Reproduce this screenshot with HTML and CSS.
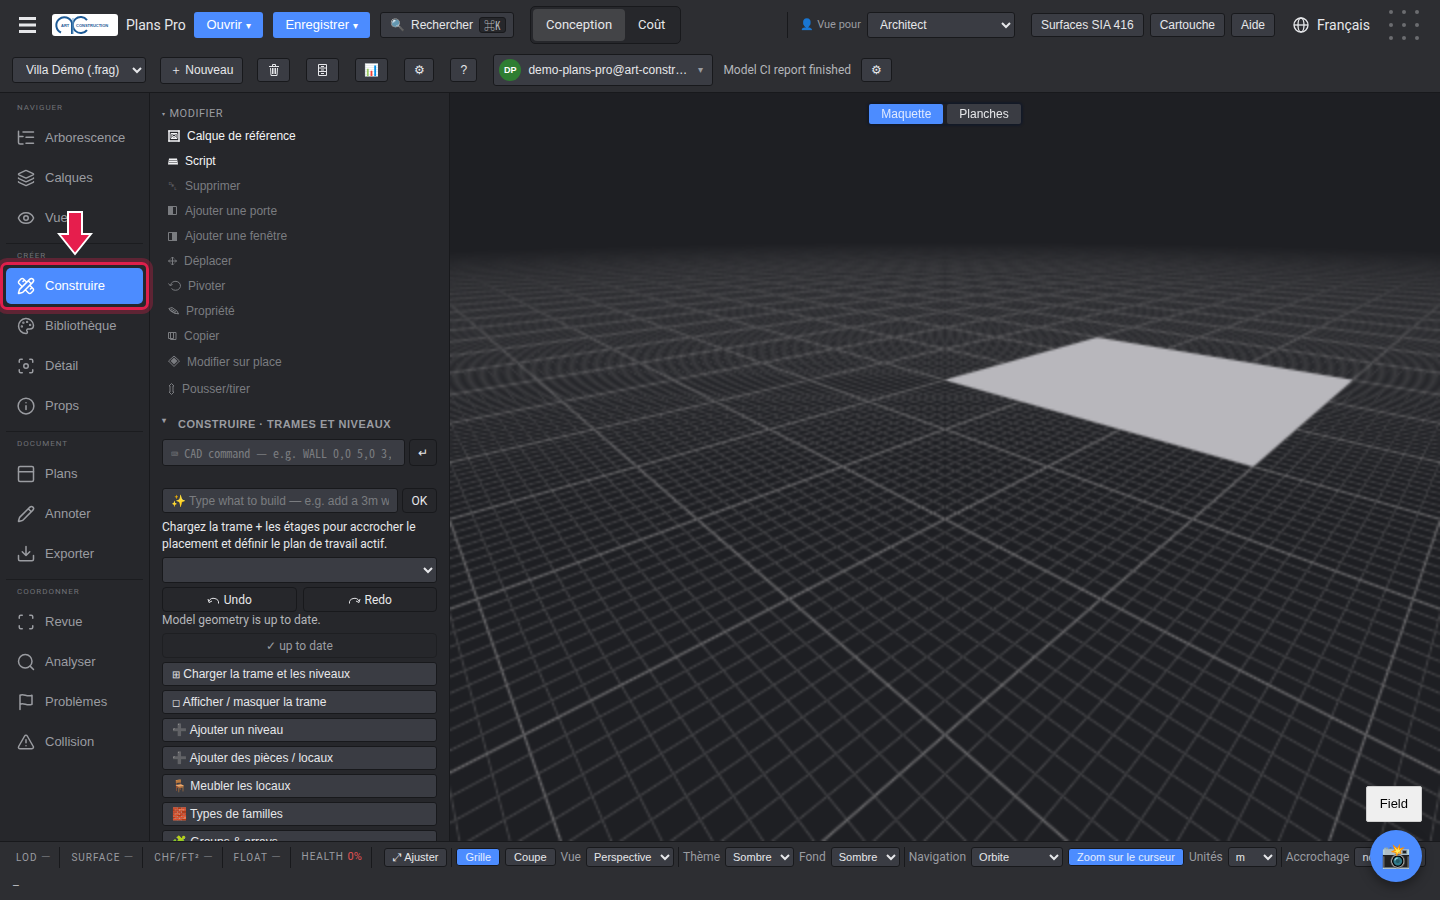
FILE: index.html
```html
<!DOCTYPE html>
<html lang="fr">
<head>
<meta charset="utf-8">
<title>Plans Pro</title>
<link rel="stylesheet" href="styles.css">
</head>
<body>
<header class="header">
  <div class="bar">
    <button class="burger" aria-label="Menu"><svg width="17" height="16" viewBox="0 0 17 16"><path d="M0 1.5h17M0 8h17M0 14.5h17" stroke="currentColor" stroke-width="3"/></svg></button>
    <div class="brand">
      <svg class="logo" width="66" height="22" viewBox="0 0 66 22" role="img" aria-label="ART Construction">
        <rect width="66" height="22" rx="3" fill="#fff"/>
        <g fill="none" stroke="#1d5a96" stroke-width="2"><path d="M9 18.5A8 8 0 1 1 20 9V20"/><path d="M35 6A8 8 0 1 0 35 16"/></g>
        <path d="M21 4V20" stroke="#6fa4cf" stroke-width="1"/>
        <text x="9" y="13" class="logo-text">ART</text><text x="24" y="13" class="logo-text">CONSTRUCTION</text>
      </svg>
      <span class="brand-name">Plans Pro</span>
    </div>
    <button class="primary w-open">Ouvrir <small>▾</small></button>
    <button class="primary w-save">Enregistrer <small>▾</small></button>
    <button class="btn search"><span>🔍</span><span>Rechercher</span><kbd>⌘K</kbd></button>
    <div class="segmented"><button class="seg active">Conception</button><button class="seg">Coût</button></div>
    <div class="bar-end">
      <label class="persona" for="persona">👤 Vue pour</label>
      <select class="select w-persona" id="persona"><option>Architect</option></select>
      <div class="links"><button class="btn">Surfaces SIA 416</button><button class="btn">Cartouche</button><button class="btn">Aide</button></div>
      <button class="lang"><svg width="16" height="16" viewBox="0 0 24 24" fill="none" stroke="currentColor" stroke-width="2"><circle cx="12" cy="12" r="10.5"/><ellipse cx="12" cy="12" rx="4.5" ry="10.5"/><path d="M1.5 12h21"/></svg>Français</button>
      <svg class="dots" width="32" height="32" viewBox="0 0 32 32" fill="#6b6c70"><circle cx="3" cy="3" r="2"/><circle cx="16" cy="3" r="2"/><circle cx="29" cy="3" r="2"/><circle cx="3" cy="16" r="2"/><circle cx="16" cy="16" r="2"/><circle cx="29" cy="16" r="2"/><circle cx="3" cy="29" r="2"/><circle cx="16" cy="29" r="2"/><circle cx="29" cy="29" r="2"/></svg>
    </div>
  </div>
  <div class="bar bar-project">
    <select class="select w-project" aria-label="Projet"><option>Villa Démo (.frag)</option></select>
    <button class="btn tall">＋ Nouveau</button>
    <div class="tools">
      <button class="btn" aria-label="Supprimer le projet"><svg width="10" height="12" viewBox="0 0 10 12" fill="none" stroke="currentColor"><path d="M0 2.5h10M3.500 2V.5h3V2M1.500 4l.5 7.500h6L8.500 4M3.500 4v6M5 4v6M6.500 4v6"/></svg></button>
      <button class="btn" aria-label="Archives"><svg width="9" height="12" viewBox="0 0 9 12" fill="none" stroke="currentColor"><path d="M.5.5h8v11h-8zM.5 4h8M.5 7.500h8M3 2.500h3M3 6h3M3 9.500h3"/></svg></button>
      <button class="btn" aria-label="Rapport">📊</button>
      <button class="btn" aria-label="Réglages">⚙</button>
      <button class="btn" aria-label="Aide">?</button>
    </div>
    <button class="btn account"><span class="avatar">DP</span><span class="email">demo-plans-pro@art-construction.ch</span><small>▾</small></button>
    <span class="status">Model CI report finished</span>
    <button class="btn" aria-label="Options du rapport">⚙</button>
  </div>
</header>

<div class="main">
  <nav class="sidebar">
    <section class="group"><h2>NAVIGUER</h2>
      <button class="nav"><svg viewBox="0 0 24 24"><path d="M2 3v15a2 2 0 0 0 2 2h4M2 10h6M8 4h14M12 11h10M12 19h10"/></svg>Arborescence</button>
      <button class="nav"><svg viewBox="0 0 24 24"><path d="m12.8 2.2a2 2 0 0 0-1.7 0L2.6 6.1a1 1 0 0 0 0 1.8l8.6 3.9a2 2 0 0 0 1.7 0l8.6-3.9a1 1 0 0 0 0-1.8zM2 12a1 1 0 0 0 .6.9l8.6 3.9a2 2 0 0 0 1.7 0l8.6-3.9A1 1 0 0 0 22 12M2 17a1 1 0 0 0 .6.9l8.6 3.9a2 2 0 0 0 1.7 0l8.6-3.9A1 1 0 0 0 22 17"/></svg>Calques</button>
      <button class="nav"><svg viewBox="0 0 24 24"><path d="M2 12.3a1 1 0 0 1 0-.7 10.8 10.8 0 0 1 20 0 1 1 0 0 1 0 .7 10.8 10.8 0 0 1-20 0"/><circle cx="12" cy="12" r="3"/></svg>Vues</button>
    </section>
    <section class="group"><h2>CRÉER</h2>
      <button class="nav current"><svg viewBox="0 0 24 24"><path d="M13 7 8.700 2.700a2.400 2.400 0 0 0-3.400 0L2.700 5.300a2.400 2.400 0 0 0 0 3.400L7 13M8 6l2-2M18 16l2-2M17 11l4.300 4.300a2.400 2.400 0 0 1 0 3.400l-2.600 2.600a2.400 2.400 0 0 1-3.400 0L11 17M21.200 6.800a1 1 0 0 0-4-4L3.800 16.200a2 2 0 0 0-.5.8L2 21.400a.5.5 0 0 0 .6.6L7 20.700a2 2 0 0 0 .8-.5zM15 5l4 4"/></svg>Construire<span class="ring"></span>
        <svg class="arrow" viewBox="0 0 36 46"><path d="M11 2h14v22h9L18 44 2 24h9z"/></svg></button>
      <button class="nav"><svg viewBox="0 0 24 24"><path d="M12 22a10 10 0 1 1 10-11c0 3-2 5-5 5h-2.300a1.800 1.800 0 0 0-1.400 2.800l.3.400A1.800 1.800 0 0 1 12 22z"/><g class="solid"><circle cx="13.500" cy="6.500" r=".6"/><circle cx="17.500" cy="10.500" r=".6"/><circle cx="6.500" cy="12.500" r=".6"/><circle cx="8.500" cy="7.500" r=".6"/></g></svg>Bibliothèque</button>
      <button class="nav"><svg viewBox="0 0 24 24"><circle cx="12" cy="12" r="3"/><path d="M3 7V5a2 2 0 0 1 2-2h2M17 3h2a2 2 0 0 1 2 2v2M21 17v2a2 2 0 0 1-2 2h-2M7 21H5a2 2 0 0 1-2-2v-2"/></svg>Détail</button>
      <button class="nav"><svg viewBox="0 0 24 24"><circle cx="12" cy="12" r="10.500"/><path d="M12 16.500V11.500M12 7.500v.1"/></svg>Props</button>
    </section>
    <section class="group"><h2>DOCUMENT</h2>
      <button class="nav"><svg viewBox="0 0 24 24"><rect x="2" y="2" width="20" height="20" rx="2"/><path d="M2 9h20"/></svg>Plans</button>
      <button class="nav"><svg viewBox="0 0 24 24"><path d="M21.200 6.800a1 1 0 0 0-4-4L3.800 16.200a2 2 0 0 0-.5.8L2 21.400a.5.5 0 0 0 .6.6L7 20.700a2 2 0 0 0 .8-.5zM15 5l4 4"/></svg>Annoter</button>
      <button class="nav"><svg viewBox="0 0 24 24"><path d="M2 14v5a2 2 0 0 0 2 2h16a2 2 0 0 0 2-2v-5M7 9l5 5 5-5M12 14V2"/></svg>Exporter</button>
    </section>
    <section class="group"><h2>COORDONNER</h2>
      <button class="nav"><svg viewBox="0 0 24 24"><path d="M3 7V5a2 2 0 0 1 2-2h2M17 3h2a2 2 0 0 1 2 2v2M21 17v2a2 2 0 0 1-2 2h-2M7 21H5a2 2 0 0 1-2-2v-2"/></svg>Revue</button>
      <button class="nav"><svg viewBox="0 0 24 24"><circle cx="11" cy="11" r="9"/><path d="m22 22-4.500-4.500"/></svg>Analyser</button>
      <button class="nav"><svg viewBox="0 0 24 24"><path d="M4 22V3c5-3 9 3 16 0v12c-7 3-11-3-16 0"/></svg>Problèmes</button>
      <button class="nav"><svg viewBox="0 0 24 24"><path d="m21.700 18-8-14a2 2 0 0 0-3.500 0l-8 14A2 2 0 0 0 4 21h16a2 2 0 0 0 1.700-3M12 9v4M12 17v.1"/></svg>Collision</button>
    </section>
  </nav>

  <aside class="panel">
    <h2 class="fold"><small>▾</small>MODIFIER</h2>
    <div class="actions">
      <button class="action"><svg width="12" height="12" viewBox="0 0 12 12"><path d="M1 1h10v10H1zM3 3.500h6v5H3z"/><circle cx="6" cy="5.500" r="1.500"/><path d="M3 9l2-2h2l2 2M0 1h12M0 11h12M1 0v12M11 0v12" /></svg>Calque de référence</button>
      <button class="action"><svg width="10" height="12" viewBox="0 0 10 12"><path d="M1 3.500h8l1 6H0z" fill="currentColor" stroke="none"/><path d="M1 5.500h8M1 7.500h8" stroke="#8a8b8e"/></svg>Script</button>
      <button class="action" disabled><span>␡</span>Supprimer</button>
      <button class="action" disabled><svg width="10" height="12" viewBox="0 0 10 12"><path d="M.5 1.500h8v8h-8z"/><path d="M0 1h5v9H0z" fill="currentColor" stroke="none"/></svg>Ajouter une porte</button>
      <button class="action" disabled><svg width="10" height="12" viewBox="0 0 10 12"><path d="M.5 2.500h8v8h-8z"/><path d="M4 2h5v9H4z" fill="currentColor" stroke="none"/></svg>Ajouter une fenêtre</button>
      <button class="action" disabled><svg width="9" height="12" viewBox="0 0 9 12"><path d="M4.500 2v8M.5 6h8M3 3.500 4.500 2 6 3.500M3 8.500 4.500 10 6 8.500M2 4.500.5 6 2 7.500M7 4.500 8.500 6 7 7.500"/></svg>Déplacer</button>
      <button class="action" disabled><svg width="13" height="12" viewBox="0 0 13 12"><path d="M2.500 5.500a5 4.500 0 1 1 1 3M.5 3.500l2 2.500 2-2"/></svg>Pivoter</button>
      <button class="action" disabled><svg width="11" height="12" viewBox="0 0 11 12"><path d="M1 3.500 4 2.500l5 3.500 1.500 3L7 8 2 5zM1 3.500l1.500 2.500 4.500 2.500h3.500M3 4l5 3"/></svg>Propriété</button>
      <button class="action" disabled><svg width="9" height="12" viewBox="0 0 9 12"><path d="M.5 2.500h5v6h-5zM2.500 2.500h5.500v7h-5.500z"/></svg>Copier</button>
      <button class="action inplace" disabled><svg width="12" height="14" viewBox="0 0 12 14"><path d="M6 1l5.500 5L6 11.500.5 6z"/><path d="M6 2.500 9.500 6 6 9.500 2.500 6z" fill="currentColor" stroke="none"/></svg>Modifier sur place</button>
      <button class="action" disabled><svg width="7" height="12" viewBox="0 0 7 12"><path d="M3.500.5 6 3H5v6h1l-2.500 2.500L1 9h1V3H1z"/></svg>Pousser/tirer</button>
    </div>
    <h2 class="fold strong"><small>▾</small>CONSTRUIRE · TRAMES ET NIVEAUX</h2>
    <div class="field-row cad"><input class="input mono" aria-label="Commande CAD" placeholder="⌨ CAD command — e.g. WALL 0,0 5,0 3,0"><button class="ghost" aria-label="Valider">↵</button></div>
    <div class="field-row"><input class="input" aria-label="Description" placeholder="✨ Type what to build — e.g. add a 3m wall"><button class="ghost ok">OK</button></div>
    <p class="hint">Chargez la trame + les étages pour accrocher le placement et définir le plan de travail actif.</p>
    <select class="select level" aria-label="Niveau"><option></option></select>
    <div class="undo">
      <button class="ghost"><svg width="13" height="10" viewBox="0 0 13 10"><path d="M2 6a5 4.500 0 0 1 9.500 2.500M1 4l1 3.500L5 6"/></svg>Undo</button>
      <button class="ghost"><svg width="13" height="10" viewBox="0 0 13 10"><path d="M11 6a5 4.500 0 0 0-9.500 2.500M12 4l-1 3.500L8 6"/></svg>Redo</button>
    </div>
    <p class="sync">Model geometry is up to date.</p>
    <button class="ghost wide" disabled>✓ up to date</button>
    <div class="commands">
      <button class="btn"><small>⊞</small> Charger la trame et les niveaux</button>
      <button class="btn"><small>◻</small> Afficher / masquer la trame</button>
      <button class="btn">➕ Ajouter un niveau</button>
      <button class="btn">➕ Ajouter des pièces / locaux</button>
      <button class="btn">🪑 Meubler les locaux</button>
      <button class="btn">🧱 Types de familles</button>
      <button class="btn">🧩 Groups &amp; arrays</button>
    </div>
  </aside>

  <main class="viewport">
    <canvas class="scene"></canvas>
    <div class="tabs"><button class="tab active">Maquette</button><button class="tab">Planches</button></div>
  </main>
</div>

<footer class="footer">
  <div class="foot-row">
    <div class="metrics">
      <span class="metric">LOD <i>—</i></span><span class="metric">SURFACE <i>—</i></span><span class="metric">CHF/FT² <i>—</i></span><span class="metric">FLOAT <i>—</i></span><span class="metric">HEALTH <b>0%</b></span>
    </div>
    <div class="set"><button class="mini fit">⤢ Ajuster</button></div>
    <div class="set"><button class="mini on">Grille</button><button class="mini">Coupe</button><label for="view">Vue</label><select class="mini-select w-view" id="view"><option>Perspective</option></select></div>
    <div class="set"><label for="theme">Thème</label><select class="mini-select w-theme" id="theme"><option>Sombre</option></select><label for="back">Fond</label><select class="mini-select w-theme" id="back"><option>Sombre</option></select></div>
    <div class="set"><label for="navmode">Navigation</label><select class="mini-select w-nav" id="navmode"><option>Orbite</option></select><button class="mini on">Zoom sur le curseur</button><label for="units">Unités</label><select class="mini-select w-units" id="units"><option>m</option></select></div>
    <div class="set"><label for="snap">Accrochage</label><select class="mini-select w-snap" id="snap"><option>normal</option></select></div>
  </div>
  <div class="message">–</div>
</footer>
<div class="floating"><button class="field-btn">Field</button><button class="camera" aria-label="Capture">📸</button></div>
<script src="scene.js"></script>
</body>
</html>
```

FILE: styles.css
```css
:root {
  --ui: "Liberation Sans", Arial, sans-serif;
  --text: Roboto, sans-serif;
  --mono: "Noto Sans Mono CJK JP", "Noto Sans Mono CJK SC", "Liberation Mono", monospace;
  --bar: #2d2e32;
  --side: #26272b;
  --control: #3a3c43;
  --line: #18191c;
  --ink: #e6e7ea;
  --muted: #9a9ca1;
  --blue: #4c8cff;
}
* { box-sizing: border-box; }
body { margin: 0; height: 100vh; display: flex; flex-direction: column; overflow: hidden; background: var(--bar); color: var(--ink); font: 12px/16px var(--text); }
button, select, input { font: 12px/16px var(--ui); color: inherit; margin: 0; }
button { white-space: nowrap; }
h2, p { margin: 0; font-weight: 400; }

.header { flex: none; border-bottom: 1px solid var(--line); }
.bar { display: flex; align-items: center; height: 50px; padding: 0 20px 0 12px; gap: 10px; }
.bar-project { height: 42px; padding-bottom: 2px; }
.burger { width: 30px; height: 30px; padding: 0 0 0 7px; border: 0; background: none; display: flex; align-items: center; }
.brand { display: flex; align-items: center; gap: 8px; font-size: 14px; }
.logo-text { font: bold 4px var(--ui); fill: #1d5a96; }
.brand-name { width: 58px; white-space: nowrap; }
.primary { height: 26px; border: 0; border-radius: 3px; background: var(--blue); color: #fff; font-size: 13px; padding: 0 11px; }
.primary small { font-size: 10px; }
.w-open { width: 69px; }
.w-save { width: 97px; }
.btn { height: 24px; padding: 0 9px; border: 1px solid var(--line); border-radius: 3px; background: var(--control); }
.search { height: 26px; width: 134px; display: flex; align-items: center; gap: 6px; }
kbd { font: 11px/14px var(--mono); border: 1px solid var(--line); border-radius: 3px; background: var(--side); padding: 0 4px; color: #b4b6ba; }
.segmented { display: flex; margin-left: 6px; padding: 2px; border: 1px solid var(--line); border-radius: 5px; background: var(--side); }
.seg { height: 32px; padding: 0 13px; border: 0; border-radius: 4px; background: none; font: 13px/16px var(--text); }
.seg.active { background: #434447; }
.bar-end { margin-left: auto; display: flex; align-items: center; gap: 6px; }
.persona { border-left: 1px solid var(--line); padding-left: 12px; font-size: 11px; line-height: 26px; color: var(--muted); white-space: nowrap; }
.select { height: 26px; padding: 0 8px; border: 1px solid var(--line); border-radius: 3px; background: var(--control); }
.w-persona { width: 148px; }
.links { display: flex; gap: 6px; margin-left: 10px; }
.lang { display: flex; align-items: center; gap: 8px; margin: 0 12px; padding: 0; border: 0; background: none; font: 14px/16px var(--text); }
.w-project { width: 134px; padding: 0 9px; margin-right: 4px; }
.tall { height: 27px; }
.tools { display: flex; gap: 16px; margin: 0 6px 0 4px; }
.tools .btn { width: 33px; padding: 0; display: flex; align-items: center; justify-content: center; }
.tools .btn:nth-child(4) { width: 30px; }
.tools .btn:nth-child(5) { width: 27px; }
.account { width: 220px; height: 32px; padding: 0 9px 0 5px; display: flex; align-items: center; gap: 7px; }
.avatar { flex: none; width: 22px; height: 22px; border-radius: 50%; background: #2e7d32; color: #fff; font: bold 9px/22px var(--ui); }
.email { overflow: hidden; text-overflow: ellipsis; flex: 1; text-align: left; }
.account small { color: var(--muted); font-size: 10px; }
.status { color: #b4b6ba; white-space: nowrap; }

.main { flex: 1; min-height: 0; display: flex; }
.sidebar { flex: none; position: relative; z-index: 1; width: 150px; padding: 3px 6px 0; border-right: 1px solid var(--line); background: var(--side); }
.group { display: flex; flex-direction: column; padding: 6px 0 5px; border-bottom: 1px solid #1b1c1f; }
.group:last-child { border: 0; }
.group h2 { padding-left: 11px; margin-bottom: 4px; font-size: 8px; line-height: 12px; letter-spacing: 1px; color: #6f7176; }
.nav { position: relative; display: flex; align-items: center; gap: 10px; height: 36px; margin: 2px 0; padding: 0 11px; border: 0; border-radius: 5px; background: none; color: var(--muted); font-size: 13px; }
.nav svg { width: 18px; height: 18px; fill: none; stroke: currentColor; stroke-width: 2; stroke-linecap: round; stroke-linejoin: round; }
.nav .solid { fill: currentColor; }
.current { background: var(--blue); color: #fff; }
.ring { position: absolute; inset: -6px; border: 3px solid #df1f4b; border-radius: 7px; box-shadow: 0 0 0 4px rgba(225, 29, 72, .3); }
.nav .arrow { position: absolute; left: 51px; bottom: 48px; width: 36px; height: 46px; fill: #e61e4d; stroke: #fff; stroke-linejoin: miter; }

.panel { flex: none; width: 300px; padding: 12px; overflow: hidden; border-right: 1px solid var(--line); background: var(--side); }
.fold { display: flex; gap: 4px; font-size: 11px; line-height: 18px; letter-spacing: 0.5px; color: var(--muted); }
.fold small { font-size: 6px; }
.actions { display: flex; flex-direction: column; padding: 0 6px; margin-bottom: 14px; }
.action { display: flex; align-items: center; gap: 7px; height: 25px; padding: 0; border: 0; background: none; color: #f2f3f5; text-align: left; }
.action:disabled { color: #7a7c80; }
.action svg, .undo svg { fill: none; stroke: currentColor; }
.action span { width: 10px; }
.inplace { height: 28px; }
.fold.strong { gap: 4px; font: bold 11px/18px var(--ui); letter-spacing: 0.5px; margin-bottom: 6px; }
.strong small { width: 12px; font-size: 8px; line-height: 12px; }
.field-row { display: flex; gap: 4px; }
.input { flex: 1; min-width: 0; height: 25px; padding: 0 8px; border: 1px solid var(--line); border-radius: 3px; background: var(--control); }
.input::placeholder { color: #7a7c80; }
.mono { font-family: var(--mono); padding-right: 13px; }
.ghost { height: 25px; min-width: 28px; padding: 0 8px; border: 1px solid var(--line); border-radius: 4px; background: none; font-family: var(--text); }
.ghost:disabled { color: var(--muted); border-color: #1e1f22; }
.ok { min-width: 35px; }
.cad { margin-bottom: 22px; }
.cad .input, .cad .ghost { height: 27px; }
.hint { margin: 6px 0 4px; line-height: 17px; }
.level { width: 100%; display: block; }
.undo { display: grid; grid-template-columns: 1fr 1fr; gap: 6px; margin-top: 4px; }
.undo .ghost { display: flex; align-items: center; justify-content: center; gap: 4px; }
.sync { line-height: 17px; margin-bottom: 4px; color: #b4b6ba; }
.wide { width: 100%; display: block; }
.commands { display: grid; gap: 4px; margin-top: 4px; }
.commands .btn { text-align: left; }
.commands small { font-size: 10px; }

.viewport { flex: 1; min-width: 0; position: relative; background: #1e1f23; }
.scene { position: absolute; inset: 0; width: 100%; height: 100%; }
.tabs { position: relative; display: flex; justify-content: center; gap: 4px; width: fit-content; margin: 11px auto 0; border-radius: 3px; box-shadow: 0 0 2px 2px #141a28; }
.tab { height: 20px; padding: 0 12px; border: 0; border-radius: 2px; background: var(--control); }
.tab.active { background: var(--blue); color: #dfe9ff; }

.footer { flex: none; height: 59px; overflow: hidden; border-top: 1px solid var(--line); }
.foot-row { display: flex; align-items: center; height: 30px; padding-left: 5px; color: var(--muted); white-space: nowrap; }
.metrics { display: flex; margin-right: 12px; }
.metric { padding: 0 9px 0 11px; border-right: 1px solid var(--line); font-size: 10px; line-height: 20px; letter-spacing: 1px; }
.metric i { font-size: 12px; font-style: normal; color: #66686c; letter-spacing: 0; }
.metric b { font-size: 11px; font-weight: 400; letter-spacing: 0; color: #e05252; }
.set { display: flex; align-items: center; flex: none; gap: 5px; padding-right: 4px; margin-right: 4px; border-right: 1px solid var(--line); }
.set:last-child { border: 0; }
.mini { height: 18px; padding: 0 8px; border: 1px solid var(--line); border-radius: 3px; background: var(--control); color: var(--ink); font-size: 11px; line-height: 14px; }
.mini.on { background: var(--blue); color: #e4edff; }
.mini.fit { height: 19px; }
.mini-select { height: 20px; padding: 0 3px; border: 1px solid var(--line); border-radius: 3px; background: var(--control); color: var(--ink); font-size: 11px; }
.w-view { width: 88px; }
.w-theme { width: 69px; }
.w-nav { width: 92px; }
.w-snap { width: 72px; }
.w-units { width: 49px; }
.message { padding: 6px 12px; color: #b4b6ba; }

.floating { position: fixed; right: 18px; bottom: 18px; z-index: 2; display: flex; flex-direction: column; align-items: flex-end; gap: 8px; }
.field-btn { height: 36px; padding: 0 13px; border: 1px solid #cfcfcf; border-radius: 2px; background: #efefef; color: #000; font-size: 13px; }
.camera { width: 52px; height: 52px; padding: 0; border: 0; border-radius: 50%; background: var(--blue); font-size: 24px; line-height: 52px; box-shadow: 0 4px 12px rgba(0, 0, 0, .4); }
```

FILE: scene.js
```js
// Perspective ground grid with ten minor cells per major cell, and one floor slab.
const canvas = document.querySelector('.scene');
const HORIZON = 118, DEPTH = 749, SPREAD = 301, OFFSET = 1.43, FADE = 25;
const BG = [30, 31, 35], STRENGTH = 85, RESOLUTION = 0.5;

function gridLine(i, j, wi, wj) {
  const a = Math.abs(i - Math.round(i)) / wi;
  const b = Math.abs(j - Math.round(j)) / wj;
  return 1 - Math.min(a, b, 1);
}

function draw() {
  const w = Math.round(canvas.clientWidth * RESOLUTION);
  const h = Math.round(canvas.clientHeight * RESOLUTION);
  canvas.width = w;
  canvas.height = h;
  const scale = h / 748;
  const ctx = canvas.getContext('2d');
  const image = ctx.createImageData(w, h);
  for (let py = 0; py < h; py++) {
    const y = (py + 0.5) / scale - HORIZON;
    for (let px = 0; px < w; px++) {
      const x = (px + 0.5 - w / 2) / scale;
      let alpha = 0;
      if (y > 1) {
        const q = DEPTH / y;
        const d = x * q / SPREAD;
        const i = q - OFFSET + d / 2, j = q - OFFSET - d / 2;
        const dx = q / (2 * SPREAD), dq = q * q / DEPTH;
        const wi = (dx + dq * Math.abs(1 + x / (2 * SPREAD))) / scale;
        const wj = (dx + dq * Math.abs(1 - x / (2 * SPREAD))) / scale;
        const minor = gridLine(i * 10, j * 10, wi * 10, wj * 10);
        const major = gridLine(i, j, wi, wj);
        const fade = Math.pow(Math.max(0, 1 - Math.hypot(q, d / 2) / FADE), 1.5);
        const mix = major * (1 - minor) + minor * minor;
        alpha = mix * fade * (0.5 + 0.5 * major);
      }
      const o = (py * w + px) * 4;
      for (let c = 0; c < 3; c++) image.data[o + c] = BG[c] + alpha * (STRENGTH - c * 2);
      image.data[o + 3] = 255;
    }
  }
  ctx.putImageData(image, 0, 0);

  ctx.fillStyle = '#b8b7bc';
  ctx.beginPath();
  for (const [i, j] of [[3, 3], [6, 3], [6, 0], [3, 0]]) {
    const q = (i + j) / 2 + OFFSET;
    ctx.lineTo(w / 2 + (i - j) * SPREAD / q * scale, (HORIZON + DEPTH / q) * scale);
  }
  ctx.fill();
}
draw();
window.addEventListener('resize', draw);
```
